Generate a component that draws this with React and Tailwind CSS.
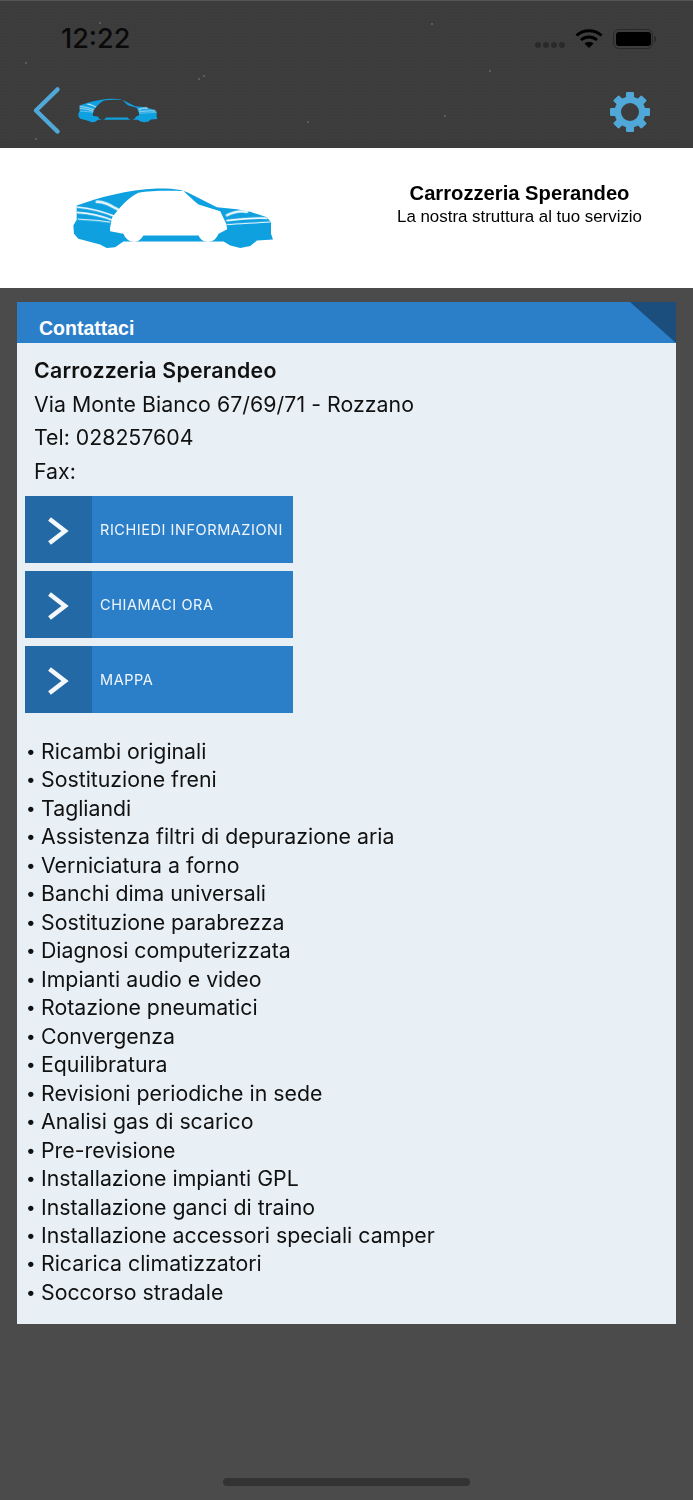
import React from "react";

const services = [
  "Ricambi originali","Sostituzione freni","Tagliandi","Assistenza filtri di depurazione aria","Verniciatura a forno","Banchi dima universali","Sostituzione parabrezza","Diagnosi computerizzata","Impianti audio e video","Rotazione pneumatici","Convergenza","Equilibratura","Revisioni periodiche in sede","Analisi gas di scarico","Pre-revisione","Installazione impianti GPL","Installazione ganci di traino","Installazione accessori speciali camper","Ricarica climatizzatori","Soccorso stradale",
];

const specks = [
  "left-[99px] top-[21px]","left-[203px] top-[74px]","left-[198px] top-[77px]","left-[431px] top-[22px]","left-[489px] top-[69px]","left-[35px] top-[137px]","left-[307px] top-[120px]","left-[444px] top-[114px]","left-[25px] top-[61px]",
];

function Car({ className, cut, id }) {
  return (
    <svg viewBox="60 45 620 195" className={className}>
      <defs>
        <filter id={`${id}-blur`} x="-10%" y="-50%" width="120%" height="200%">
          <feGaussianBlur stdDeviation="1.6" />
        </filter>
      </defs>
      <path d="M80 105 C150 80 230 58 320 54 C370 53 400 58 420 70 L500 110 L560 116 L600 124 L650 140 L662 155 L662 190 L668 207 L620 210 L600 226 L570 232 L540 225 L520 213 L220 213 L195 230 L170 232 L150 222 L85 205 L72 190 L70 165 L80 148 Z" fill="#0fa0e0" />
      <g fill="none" stroke="#ffffff" strokeLinecap="round" filter={`url(#${id}-blur)`}>
        <path d="M82 110 C120 114 160 124 195 138" strokeWidth="5" />
        <path d="M82 126 C120 128 150 135 185 148" strokeWidth="5" />
        <path d="M84 146 C120 148 150 150 180 155" strokeWidth="3" />
        <path d="M140 94 C160 92 180 104 205 118" strokeWidth="8" opacity="0.9" />
        <path d="M530 134 C550 124 570 120 590 124" strokeWidth="8" opacity="0.9" />
        <path d="M530 150 C570 146 610 140 650 143" strokeWidth="5" />
        <path d="M530 162 C570 160 620 156 660 154" strokeWidth="3" />
      </g>
      <path d="M180 172 L186 142 C205 115 235 80 265 67 C300 60 360 60 400 62 C415 75 430 92 445 102 L510 122 L528 160 L531 176 L505 190 C498 205 490 214 472 214 C458 214 450 205 445 195 L280 195 C272 208 262 215 250 214 C235 213 225 203 220 190 L180 182 Z" fill={cut} />
    </svg>
  );
}

function Chevron() {
  return (
    <svg width="22" height="30" viewBox="0 0 22 30" fill="none">
      <path d="M1.5 3 L17 15 L1.5 27" stroke="#f5f8fb" strokeWidth="4.5" />
    </svg>
  );
}

function ActionButton({ label }) {
  return (
    <div className="flex h-[67px] w-[268px] bg-[#2b7fc9]">
      <div className="flex w-[67px] items-center justify-center bg-[#2369a6] pt-[2px]"><Chevron /></div>
      <div className="flex flex-1 items-center pl-[8px] pt-[1px] text-[14.5px] tracking-[0.55px] text-[#f0f6fb]">{label}</div>
    </div>
  );
}

export default function App() {
  return (
    <div className="relative h-[1500px] w-[693px] overflow-hidden bg-[#4b4b4b] font-['Inter','Liberation_Sans',sans-serif] text-[#111]">
      <header className="relative h-[148px] border-t border-[#555] bg-[#3c3c3c] bg-[radial-gradient(#404040_1px,transparent_1px)] bg-[length:3px_3px]">
        {specks.map((c, i) => (
          <span key={i} className={`absolute h-[2px] w-[2px] rounded-full bg-[#666] ${c}`} />
        ))}
        <div className="flex h-[75px] items-center justify-between pl-[61px] pr-[37px]">
          <span className="text-[27px] font-medium leading-none text-[#0a0a0a] mb-[1px]">12:22</span>
          <div className="flex items-center">
            <div className="mr-[10px] mt-[12px] flex gap-[2px]">
              <span className="h-[6px] w-[6px] rounded-full bg-[#2a2a2a]" />
              <span className="h-[6px] w-[6px] rounded-full bg-[#2a2a2a]" />
              <span className="h-[6px] w-[6px] rounded-full bg-[#2a2a2a]" />
              <span className="h-[6px] w-[6px] rounded-full bg-[#2a2a2a]" />
            </div>
            <svg width="28" height="21" viewBox="0 0 28 21" className="mr-[10px]" fill="none" stroke="#000">
              <path d="M1.5 7.5 C8.5 1 19.5 1 26.5 7.5" strokeWidth="3" />
              <path d="M6 12 C10.5 8 17.5 8 22 12" strokeWidth="3" />
              <path d="M14 20 L9.5 15.5 C12 13.6 16 13.6 18.5 15.5 Z" fill="#000" stroke="none" />
            </svg>
            <div className="flex items-center">
              <div className="flex h-[20px] w-[40px] items-center justify-center rounded-[6px] border border-[#2a2a2a]">
                <div className="h-[14px] w-[35px] rounded-[3px] bg-black" />
              </div>
              <div className="ml-[1px] h-[6px] w-[2px] rounded-r bg-[#2a2a2a]" />
            </div>
          </div>
        </div>
        <div className="flex h-[72px] items-center justify-between pl-[32px] pr-[42px]">
          <div className="flex items-center">
            <svg width="30" height="50" viewBox="0 0 30 50" fill="none" className="mb-[2px]">
              <path d="M25.5 3.5 L4 24.5 L25.5 45.5" stroke="#4fa8d8" strokeWidth="4.5" strokeLinecap="round" strokeLinejoin="round" />
            </svg>
            <Car id="carSmall" cut="#3c3c3c" className="ml-[15px] mb-[3px] h-[27px] w-[82px]" />
          </div>
          <svg width="42" height="42" viewBox="0 0 42 42" className="mt-[-1px]">
            <g fill="#4fa8d8">
              <circle cx="21" cy="21" r="11.5" fill="none" stroke="#4fa8d8" strokeWidth="8" />
              <rect x="17" y="1" width="8" height="40" rx="1.2" />
              <rect x="17" y="1" width="8" height="40" rx="1.2" transform="rotate(45 21 21)" />
              <rect x="17" y="1" width="8" height="40" rx="1.2" transform="rotate(90 21 21)" />
              <rect x="17" y="1" width="8" height="40" rx="1.2" transform="rotate(135 21 21)" />
            </g>
            <circle cx="21" cy="21" r="9" fill="#3c3c3c" />
          </svg>
        </div>
      </header>

      <section className="flex h-[140px] items-center bg-white">
        <div className="w-[346px] pl-[70px]">
          <Car id="carLarge" cut="#ffffff" className="h-[66px] w-[207px]" />
        </div>
        <div className="flex-1 pb-[27px] text-center font-['Liberation_Sans',sans-serif] text-black">
          <div className="text-[20.2px] font-bold leading-[23px]">Carrozzeria Sperandeo</div>
          <div className="text-[16.9px] leading-[23px]">La nostra struttura al tuo servizio</div>
        </div>
      </section>

      <main className="mx-[17px] mt-[14px] h-[1022px] bg-[#e9f0f5]">
        <div className="relative flex h-[41px] items-end bg-[#2b7fc9] pb-[2px] pl-[22px] font-['Liberation_Sans',sans-serif] text-[19.5px] font-bold leading-[26px] text-white">
          Contattaci
          <div className="absolute right-0 top-0 h-full w-[46px] bg-[#1b4d7d] [clip-path:polygon(0_0,100%_0,100%_100%)]" />
        </div>
        <div className="pl-[17px] pt-[11px] text-[21.3px] leading-[33.5px]">
          <div className="font-semibold tracking-[0.25px]">Carrozzeria Sperandeo</div>
          <div className="tracking-[0.05px]">Via Monte Bianco 67/69/71 - Rozzano</div>
          <div>Tel: 028257604</div>
          <div>Fax:</div>
        </div>
        <div className="ml-[8px] mt-[8px] flex flex-col gap-[8px]">
          <ActionButton label="RICHIEDI INFORMAZIONI" />
          <ActionButton label="CHIAMACI ORA" />
          <ActionButton label="MAPPA" />
        </div>
        <ul className="mt-[24px] pl-[9px] text-[21.3px] leading-[28.47px]">
          {services.map((s) => (
            <li key={s} className="flex">
              <span className="w-[15px] text-[17px]">•</span>
              <span>{s}</span>
            </li>
          ))}
        </ul>
      </main>

      <div className="absolute bottom-[14px] left-[223px] h-[8px] w-[247px] rounded-full bg-[#333]" />
    </div>
  );
}
